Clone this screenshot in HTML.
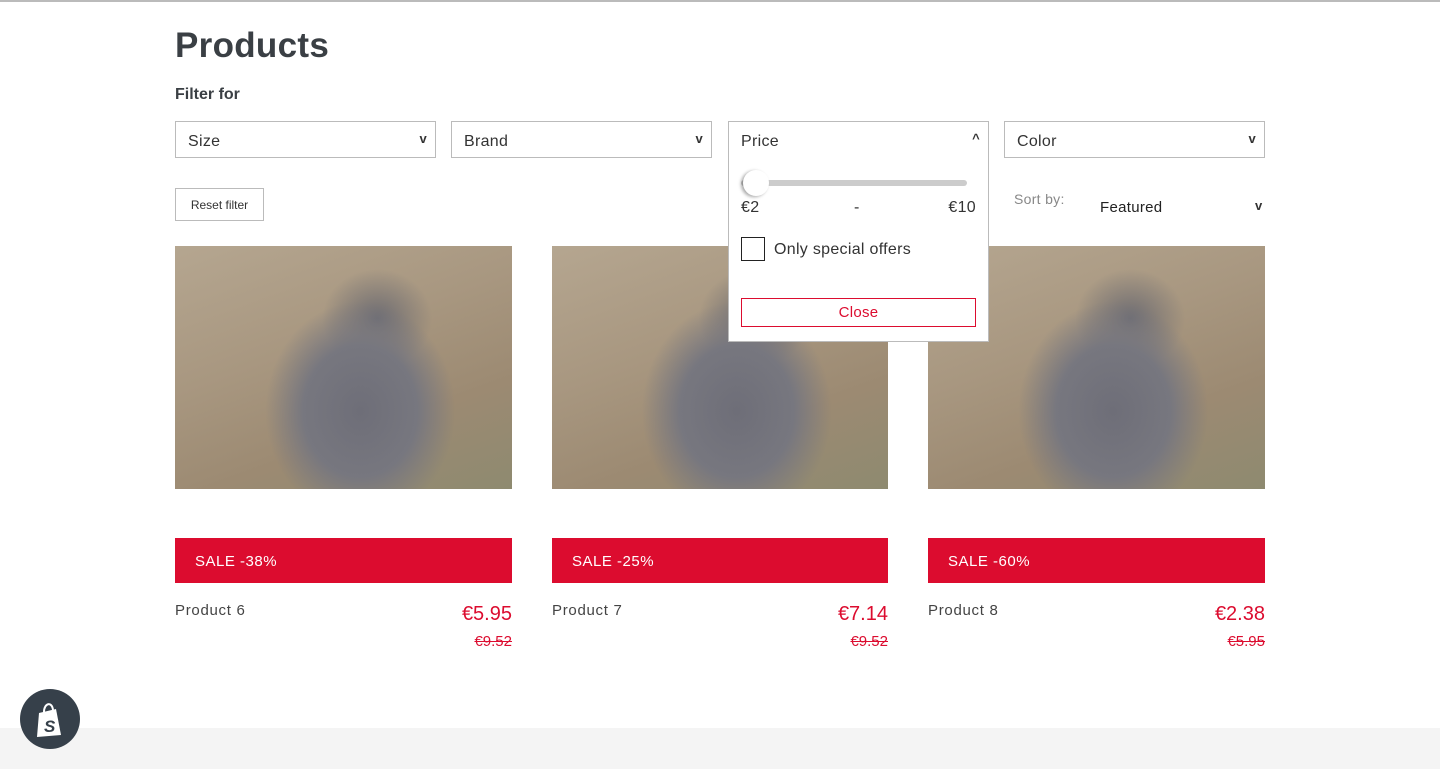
<!DOCTYPE html>
<html><head><meta charset="utf-8"><style>
*{box-sizing:border-box;margin:0;padding:0}
body{width:1440px;height:769px;overflow:hidden;background:#fff;font-family:"Liberation Sans",sans-serif;color:#333;position:relative}
.top{position:absolute;top:0;left:0;right:0;height:2px;background:#bbb}
h1{position:absolute;left:175px;top:26px;font-size:35px;font-weight:bold;color:#3a3f44;letter-spacing:.3px}
.ff{position:absolute;left:175px;top:86px;font-size:16px;font-weight:bold;color:#3a3f44}
.dd{position:absolute;top:121px;width:261px;height:37px;border:1px solid #bbb;font-size:16px;padding:11px 12px;color:#333;letter-spacing:.3px}
.dd b{position:absolute;right:8px;top:9px;font-size:13px}
.panel{position:absolute;left:728px;top:121px;width:261px;height:221px;border:1px solid #bbb;background:#fff;z-index:5;font-size:16px;letter-spacing:.3px}
.reset{position:absolute;left:175px;top:188px;width:89px;height:33px;border:1px solid #bbb;font-size:12px;text-align:center;line-height:33px;color:#333}
.img{position:absolute;top:246px;width:337px;height:243px;overflow:hidden;
background:radial-gradient(ellipse 95px 110px at 55% 68%,#6e6e78 0%,#77777f 60%,rgba(120,118,120,0) 100%),radial-gradient(ellipse 55px 50px at 60% 30%,#6d6c72 0%,rgba(110,108,112,0) 100%),linear-gradient(160deg,#b5a690,#a89780 40%,#9c8a72 70%,#8e8a70)}
.sale{position:absolute;top:538px;width:337px;height:45px;background:#dc0c2f;color:#fff;font-size:15px;padding:15px 20px;letter-spacing:.5px}
.name{position:absolute;top:602px;font-size:15px;color:#444;letter-spacing:.7px}
.price{position:absolute;top:603px;font-size:20px;color:#dc0c2f;text-align:right;width:120px}
.old{position:absolute;top:633px;font-size:15px;color:#dc0c2f;text-decoration:line-through;text-align:right;width:120px}
.foot{position:absolute;left:0;right:0;top:728px;bottom:0;background:#f4f4f4}
.shop{position:absolute;left:20px;top:689px;width:60px;height:60px;border-radius:50%;background:#36404a;z-index:3}
</style></head><body>
<div class="top"></div>
<h1>Products</h1>
<div class="ff">Filter for</div>
<div class="dd" style="left:175px">Size<b>v</b></div>
<div class="dd" style="left:451px">Brand<b>v</b></div>
<div class="dd" style="left:1004px">Color<b>v</b></div>
<div class="panel">
 <div style="position:absolute;left:12px;top:11px">Price</div>
 <div style="position:absolute;right:8px;top:9px;font-size:13px;font-weight:bold">^</div>
 <div style="position:absolute;left:12px;top:58px;width:226px;height:6px;border-radius:3px;background:#ccc"></div>
 <div style="position:absolute;left:14px;top:48px;width:26px;height:26px;border-radius:50%;background:#fff;box-shadow:-2px 1px 3px rgba(0,0,0,.35)"></div>
 <div style="position:absolute;left:12px;top:77px">€2</div>
 <div style="position:absolute;left:125px;top:77px">-</div>
 <div style="position:absolute;right:12px;top:77px">€10</div>
 <div style="position:absolute;left:12px;top:115px;width:24px;height:24px;border:1.5px solid #222"></div>
 <div style="position:absolute;left:45px;top:119px;color:#333">Only special offers</div>
 <div style="position:absolute;left:12px;top:176px;width:235px;height:29px;border:1.5px solid #dc0c2f;color:#dc0c2f;text-align:center;line-height:27px;font-size:15px">Close</div>
</div>
<div class="reset">Reset filter</div>
<div style="position:absolute;left:1014px;top:191px;font-size:14px;color:#888;letter-spacing:.3px">Sort by:</div>
<div style="position:absolute;left:1100px;top:199px;font-size:15px;color:#222;letter-spacing:.3px">Featured</div>
<div style="position:absolute;left:1255px;top:198px;font-size:13px;font-weight:bold">v</div>
<div class="img" style="left:175px"></div>
<div class="img" style="left:552px;width:336px"></div>
<div class="img" style="left:928px"></div>
<div class="sale" style="left:175px">SALE -38%</div>
<div class="sale" style="left:552px;width:336px">SALE -25%</div>
<div class="sale" style="left:928px">SALE -60%</div>
<div class="name" style="left:175px">Product 6</div>
<div class="name" style="left:552px">Product 7</div>
<div class="name" style="left:928px">Product 8</div>
<div class="price" style="left:392px">€5.95</div><div class="old" style="left:392px">€9.52</div>
<div class="price" style="left:768px">€7.14</div><div class="old" style="left:768px">€9.52</div>
<div class="price" style="left:1145px">€2.38</div><div class="old" style="left:1145px">€5.95</div>
<div class="foot"></div>
<div class="shop"><svg width="60" height="60" viewBox="0 0 60 60"><path d="M19 24 L36 20 L41 46 L17 48 Z" fill="#fff"/><path d="M24 23 C24 14 32 12 33 21" stroke="#fff" stroke-width="2" fill="none"/><text x="24" y="43" font-size="17" font-weight="bold" fill="#36404a" font-family="Liberation Sans" font-style="italic">S</text></svg></div>
</body></html>
